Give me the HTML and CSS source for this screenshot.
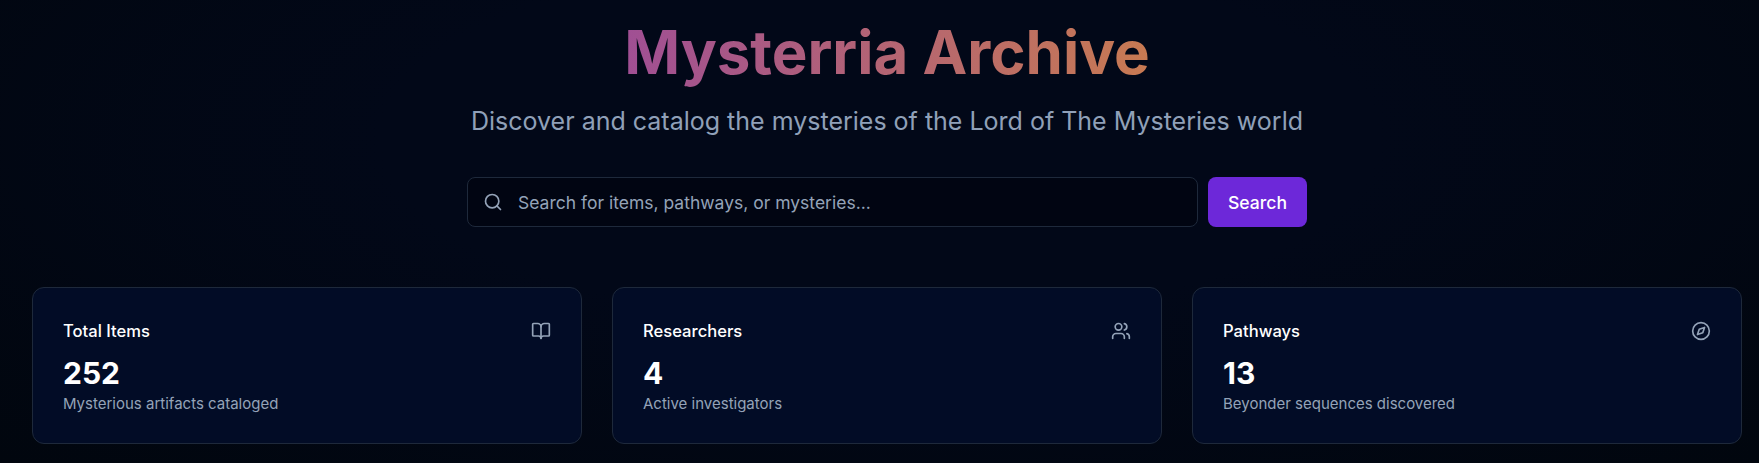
FILE: index.html
```html
<!DOCTYPE html>
<html lang="en">
<head>
<meta charset="utf-8">
<title>Mysterria Archive</title>
<link rel="stylesheet" href="styles.css">
</head>
<body>
<main class="page">
  <header class="hero">
    <h1 class="title">Mysterria Archive</h1>
    <p class="subtitle">Discover and catalog the mysteries of the Lord of The Mysteries world</p>
    <form class="search">
      <div class="search-field">
        <svg class="search-icon" viewBox="0 0 24 24"><circle cx="11" cy="11" r="8"/><path d="m21 21-4.3-4.3"/></svg>
        <span class="placeholder">Search for items, pathways, or mysteries...</span>
      </div>
      <div class="search-button">Search</div>
    </form>
  </header>
  <section class="stats">
    <article class="card">
      <div class="card-head">
        <h3 class="card-title">Total Items</h3>
        <svg class="card-icon" viewBox="0 0 24 24"><path d="M12 7v14"/><path d="M3 18a1 1 0 0 1-1-1V4a1 1 0 0 1 1-1h5a4 4 0 0 1 4 4 4 4 0 0 1 4-4h5a1 1 0 0 1 1 1v13a1 1 0 0 1-1 1h-6a3 3 0 0 0-3 3 3 3 0 0 0-3-3z"/></svg>
      </div>
      <div class="card-value">252</div>
      <p class="card-note">Mysterious artifacts cataloged</p>
    </article>
    <article class="card">
      <div class="card-head">
        <h3 class="card-title">Researchers</h3>
        <svg class="card-icon" viewBox="0 0 24 24"><path d="M16 21v-2a4 4 0 0 0-4-4H6a4 4 0 0 0-4 4v2"/><circle cx="9" cy="7" r="4"/><path d="M22 21v-2a4 4 0 0 0-3-3.87"/><path d="M16 3.13a4 4 0 0 1 0 7.75"/></svg>
      </div>
      <div class="card-value">4</div>
      <p class="card-note">Active investigators</p>
    </article>
    <article class="card">
      <div class="card-head">
        <h3 class="card-title">Pathways</h3>
        <svg class="card-icon" viewBox="0 0 24 24"><circle cx="12" cy="12" r="10"/><polygon points="16.24 7.76 14.12 14.12 7.76 16.24 9.88 9.88 16.24 7.76"/></svg>
      </div>
      <div class="card-value">13</div>
      <p class="card-note">Beyonder sequences discovered</p>
    </article>
  </section>
</main>
</body>
</html>
```
FILE: styles.css
```css
* { box-sizing: border-box; }
html, body { margin: 0; height: 100%; }
body {
  overflow: hidden;
  background: #020617;
  color: #fff;
  font-family: Inter, "Liberation Sans", sans-serif;
}
.page {
  height: 463px;
  padding: 0 17px 0 32px;
  background: radial-gradient(ellipse at 50% 30%, #020818 40%, #01060e 100%);
}
.hero { display: flex; flex-direction: column; align-items: center; padding-top: 16px; }
.title {
  margin: 0;
  font-size: 60px;
  line-height: 72px;
  font-weight: 700;
  background: linear-gradient(90deg, #a04f94, #c87a52);
  -webkit-background-clip: text;
  background-clip: text;
  color: transparent;
}
.subtitle { margin: 17px 0 0; font-size: 25px; line-height: 32px; color: #90a0b8; }
.search { display: flex; gap: 10px; width: 840px; margin-top: 40px; }
.search-field {
  flex: 1;
  height: 50px;
  display: flex;
  align-items: center;
  gap: 15px;
  padding-left: 15px;
  background: #010512;
  border: 1px solid #1e293b;
  border-radius: 8px;
}
.search-icon { width: 20px; height: 20px; fill: none; stroke: #94a3b8; stroke-width: 2; stroke-linecap: round; stroke-linejoin: round; }
.placeholder { font-size: 17.5px; color: #94a3b8; }
.search-button {
  width: 99px;
  height: 50px;
  display: flex;
  align-items: center;
  justify-content: center;
  background: #6d28d9;
  border-radius: 8px;
  font-size: 17.6px;
  font-weight: 500;
}
.stats { display: grid; grid-template-columns: repeat(3, 1fr); gap: 30px; margin-top: 60px; }
.card {
  height: 157px;
  padding: 33px 30px;
  background: #020c26;
  border: 1px solid #1e293b;
  border-radius: 12px;
}
.card-head { display: flex; justify-content: space-between; align-items: center; height: 20px; }
.card-title { margin: 0; font-size: 16.6px; font-weight: 500; }
.card-icon { width: 20px; height: 20px; fill: none; stroke: #94a3b8; stroke-width: 2; stroke-linecap: round; stroke-linejoin: round; }
.card-value { margin-top: 14px; font-size: 30px; line-height: 36px; font-weight: 700; }
.card-note { margin: 3px 0 0; font-size: 15px; line-height: 20px; color: #94a3b8; }
```
